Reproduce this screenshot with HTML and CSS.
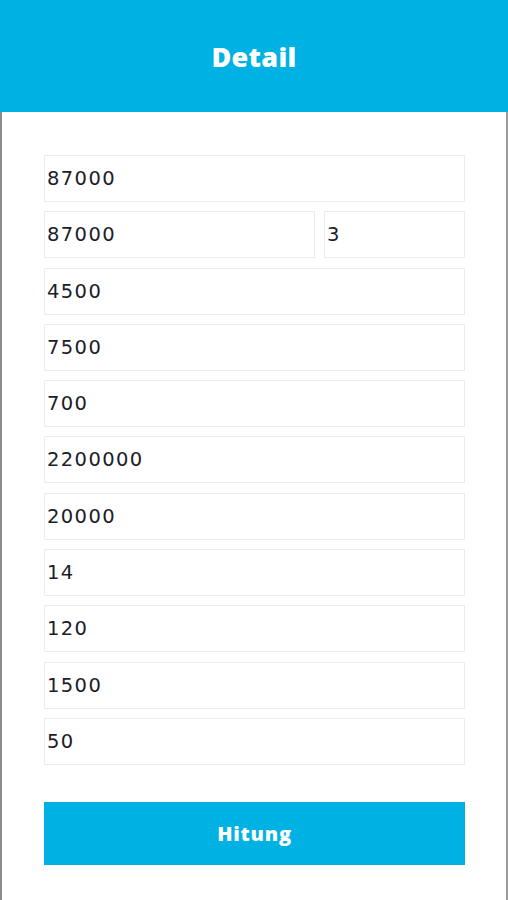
FILE: index.html
```html
<!DOCTYPE html>
<html>
<head>
<meta charset="utf-8">
<link rel="stylesheet" href="styles.css">
</head>
<body>
<header class="topbar"><h1 class="title">Detail</h1></header>
<main class="content">
  <form class="form">
    <div class="field">87000</div>
    <div class="row-split">
      <div class="field">87000</div>
      <div class="field">3</div>
    </div>
    <div class="field">4500</div>
    <div class="field">7500</div>
    <div class="field">700</div>
    <div class="field">2200000</div>
    <div class="field">20000</div>
    <div class="field">14</div>
    <div class="field">120</div>
    <div class="field">1500</div>
    <div class="field">50</div>
    <button type="button" class="btn">Hitung</button>
  </form>
</main>
</body>
</html>
```
FILE: styles.css
```css
html, body {
  margin: 0;
  padding: 0;
  background: #ffffff;
}
body {
  width: 508px;
  height: 900px;
  overflow: hidden;
  display: flex;
  flex-direction: column;
  font-family: "DejaVu Sans", sans-serif;
}
.topbar {
  height: 112px;
  background: #00b2e3;
  display: flex;
  align-items: center;
  justify-content: center;
  flex-shrink: 0;
}
.title {
  margin: 0;
  color: #ffffff;
  font-family: "Open Sans", sans-serif;
  font-weight: 800;
  font-size: 27px;
  letter-spacing: 0.3px;
}
.content {
  flex: 1;
  border-left: 2px solid #8c8c8c;
  border-right: 2px solid #9a9a9a;
  padding: 43px 41px 0 42px;
}
.form {
  display: flex;
  flex-direction: column;
  gap: 9.3px;
}
.row-split {
  display: grid;
  grid-template-columns: 271fr 141fr;
  gap: 9px;
}
.field {
  box-sizing: border-box;
  height: 47px;
  border: 1.5px solid #ececec;
  display: flex;
  align-items: center;
  padding-left: 2px;
  color: #1c1c2a;
  font-family: "DejaVu Sans", sans-serif;
  font-size: 19.5px;
  letter-spacing: 1.4px;
}
.btn {
  margin-top: 27.7px;
  height: 63px;
  border: none;
  background: #00b2e3;
  color: #ffffff;
  font-family: "Open Sans", sans-serif;
  font-weight: 800;
  font-size: 20px;
  letter-spacing: 0.8px;
  cursor: pointer;
}
```
